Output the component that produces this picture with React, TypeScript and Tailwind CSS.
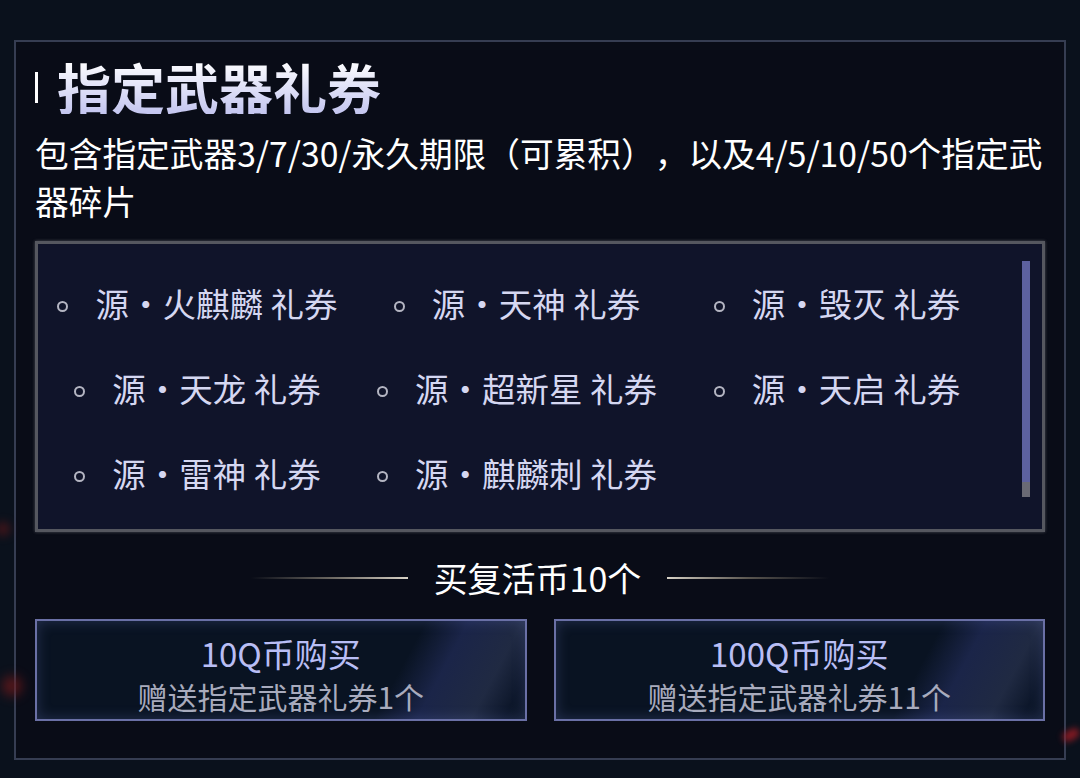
import React from "react";

const FONT = { fontFamily: '"Noto Sans CJK SC", "Noto Sans", sans-serif' };

const vouchers = [
  ["火麒麟", "天神", "毁灭"],
  ["天龙", "超新星", "天启"],
  ["雷神", "麒麟刺"],
];

function Voucher({ name }: { name: string }) {
  return (
    <div className="flex items-center justify-center gap-[27px]">
      <span className="shrink-0 w-[11px] h-[11px] mt-[8px] rounded-full border-2 border-[#b4b5c2]" />
      <span className="text-[33.5px] leading-none text-[#d5d7f1] whitespace-pre">
        源・{name} 礼券
      </span>
    </div>
  );
}

function BuyButton({ price, gift }: { price: string; gift: string }) {
  return (
    <button className="relative flex-1 h-[102px] border-2 border-[#6a70a6] bg-[#091322] shadow-[inset_0_0_14px_rgba(110,125,200,0.28)] overflow-hidden flex flex-col items-center pt-[11px]">
      <span className="pointer-events-none absolute inset-0 bg-[linear-gradient(118deg,transparent_72%,rgba(90,100,210,0.22)_80%,rgba(150,160,235,0.16)_90%,rgba(90,100,200,0.05)_96%,transparent_100%)]" />
      <span className="relative text-[33px] leading-[42px] text-[#b9bef5]">{price}</span>
      <span className="relative text-[30px] leading-[44px] text-[#a8abbd]">{gift}</span>
    </button>
  );
}

export default function App() {
  return (
    <div style={FONT} className="relative w-[1080px] h-[778px] overflow-hidden bg-[#0a111c] pt-[40px] px-[14px]">
      <span className="absolute left-[2px] top-[676px] w-[20px] h-[20px] rounded-full bg-[#7a1a1a] blur-[6px] opacity-70" />
      <span className="absolute left-[-4px] top-[522px] w-[14px] h-[14px] rounded-full bg-[#6a1818] blur-[5px] opacity-60" />
      <span className="absolute left-[1062px] top-[730px] w-[18px] h-[10px] rounded-full bg-[#a01c24] blur-[3px] opacity-80 rotate-[-30deg]" />

      <div className="h-[720px] border-2 border-[#363d52] bg-[#090c17] px-[19px]">
        <div className="mt-[18px] h-[54px] flex items-center gap-[19px]">
          <span className="w-[3px] h-[31px] bg-white" />
          <h1 className="text-[54px] leading-[54px] font-bold bg-gradient-to-b from-white to-[#c3c5ef] bg-clip-text text-transparent">
            指定武器礼券
          </h1>
        </div>

        <p className="mt-[15px] text-[33.7px] leading-[48px] text-white whitespace-nowrap [text-spacing-trim:space-all]">
          包含指定武器3/7/30/永久期限（可累积），以及4/5/10/50个指定武
          <br />
          器碎片
        </p>

        <div className="relative mt-[16px] h-[291px] border-[3px] border-[#55575f] bg-[#10142a] shadow-[0_0_3px_rgba(200,200,210,0.35)]">
          <div className="grid grid-cols-[319px_320px_320px] pt-[16px]">
            {vouchers.map((row, r) =>
              row.map((v) => (
                <div key={r + v} className="h-[85px] flex items-center justify-center">
                  <Voucher name={v} />
                </div>
              ))
            )}
          </div>
          <div className="absolute right-[12px] top-[17px] w-[8px] h-[236px] bg-[#6a6a74]">
            <div className="h-[221px] bg-[#5d619f]" />
          </div>
        </div>

        <div className="mt-[22px] h-[48px] flex items-center justify-center gap-[26px]">
          <span className="w-[157px] h-[2px] bg-gradient-to-r from-transparent via-[#6a6660] to-[#d8d2c6]" />
          <span className="text-[34px] leading-none text-white">买复活币10个</span>
          <span className="w-[162px] h-[2px] bg-gradient-to-r from-[#d8d2c6] via-[#5a5650] to-transparent" />
        </div>

        <div className="mt-[17px] flex gap-[27px]">
          <BuyButton price="10Q币购买" gift="赠送指定武器礼券1个" />
          <BuyButton price="100Q币购买" gift="赠送指定武器礼券11个" />
        </div>
      </div>
    </div>
  );
}
